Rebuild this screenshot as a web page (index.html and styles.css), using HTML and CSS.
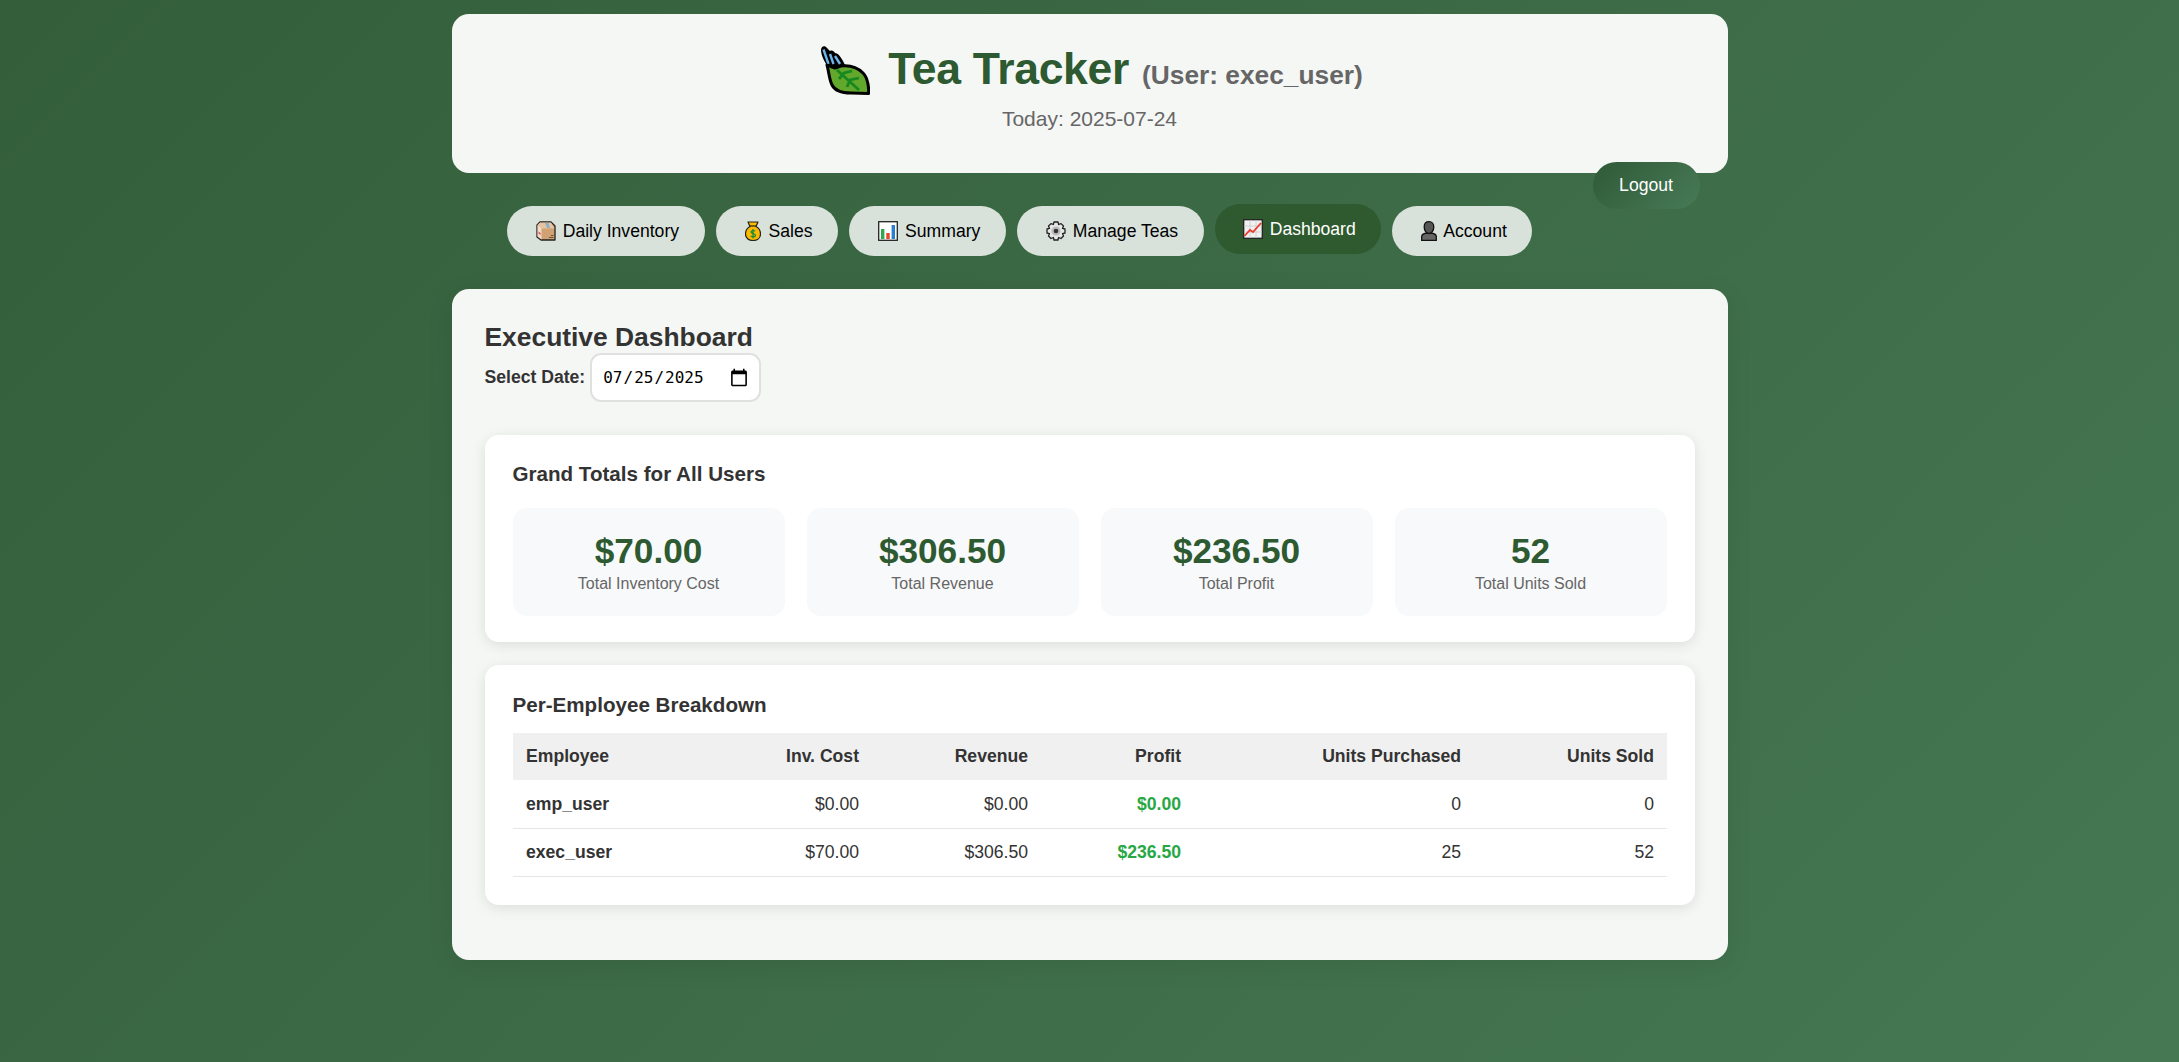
FILE: index.html
```html
<!DOCTYPE html>
<html lang="en">
<head>
<meta charset="utf-8">
<title>Tea Tracker</title>
<link rel="stylesheet" href="styles.css">
</head>
<body>
<div class="container">
  <header class="site-header">
    <h1 class="title">
      <svg class="leaf" viewBox="0 0 49 49" aria-hidden="true">
        <path d="M0 4C0 0 4 -1 6 2L9 5C11 4 13 5 14 7C17 7 20 11 23 17L25 21L9 23C4 18 0 9 0 4Z" fill="#000"/>
        <path d="M2.500 3.500L7.500 18M9 8L12.500 18M14 10L19 18" stroke="#6fb4e8" stroke-width="2.400" fill="none"/>
        <path d="M6 19C8 26 8 33 11 39C14 45 22 47 30 47L47.500 47.500C48 42 47 32 42 27C36 21 28 19 20 20L14 22C11 21 8 20 6 19Z" fill="#62a82c" stroke="#000" stroke-width="3" stroke-linejoin="round"/>
        <path d="M16 24L38 44M18 33L23 27L31 25M26 41L29 34L38 32" stroke="#16881f" stroke-width="2.800" fill="none"/>
      </svg>
      <span class="title-text">Tea Tracker</span>
      <small class="title-user">(User: exec_user)</small>
    </h1>
    <p class="today">Today: 2025-07-24</p>
  </header>
  <a class="logout" href="#">Logout</a>

  <nav class="nav">
    <a class="tab" href="#">
      <svg class="icon" viewBox="0 0 20 20" aria-hidden="true">
        <path d="M4 1H15L19 5V19H5L1 16V4Z" fill="#cfa173" stroke="#222" stroke-width="1.300" stroke-linejoin="round"/>
        <path d="M1.500 4L5 7.500H18.500L15 1.500H4Z" fill="#e6c3a2"/>
        <path d="M5.500 7.500V18.500L1.500 15.500V4Z" fill="#f2dcc8"/>
        <path d="M9 2H12.500L14 7H11Z" fill="#8ab0c8"/>
        <path d="M2.500 10.500L4.500 12V14L2.500 12.500Z" fill="#e0465a"/>
        <path d="M13 16.500H17.500M15 14.500H17.500" stroke="#6b5138" stroke-width="1.200"/>
      </svg>Daily Inventory</a>
    <a class="tab" href="#">
      <svg class="icon icon-bag" viewBox="0 0 16 20" aria-hidden="true">
        <path d="M3 1H13L11 5.500C14 7 15.500 10 15.500 13C15.500 17 12.500 19.500 8 19.500C3.500 19.500 .5 17 .5 13C.5 10 2 7 5 5.500Z" fill="#fdb900" stroke="#222" stroke-width="1.200" stroke-linejoin="round"/>
        <path d="M4 5H12" stroke="#222" stroke-width="1.200"/>
        <path d="M10.200 10.200C9.500 9.300 6 9.200 6 11C6 13 10.500 12.400 10.500 14.500C10.500 16.200 7 16.200 5.800 15M8 8V17.500" stroke="#1a8a3a" stroke-width="1.300" fill="none"/>
      </svg>Sales</a>
    <a class="tab" href="#">
      <svg class="icon" viewBox="0 0 20 20" aria-hidden="true">
        <rect x=".7" y=".7" width="18.600" height="18.600" fill="#fff" stroke="#222" stroke-width="1.300"/>
        <rect x="3" y="8" width="3.400" height="10" fill="#2fa84f"/>
        <rect x="8.300" y="12" width="3.400" height="6" fill="#e8452c"/>
        <rect x="13.600" y="4" width="3.400" height="14" fill="#2a7fd0"/>
      </svg>Summary</a>
    <a class="tab" href="#">
      <svg class="icon" viewBox="0 0 20 20" aria-hidden="true">
        <path d="M8 1H12L12.600 3.500L15 2.600L17.500 5L16.500 7.400L19 8V12L16.500 12.600L17.500 15L15 17.500L12.600 16.500L12 19H8L7.400 16.500L5 17.500L2.500 15L3.500 12.600L1 12V8L3.500 7.400L2.500 5L5 2.600L7.400 3.500Z" fill="#e6e6e6" stroke="#222" stroke-width="1.300" stroke-linejoin="round"/>
        <circle cx="10" cy="10" r="4.600" fill="#bbb"/>
        <circle cx="10" cy="10" r="2.300" fill="#333"/>
      </svg>Manage Teas</a>
    <a class="tab tab-active" href="#">
      <svg class="icon" viewBox="0 0 20 20" aria-hidden="true">
        <rect x=".7" y=".7" width="18.600" height="18.600" fill="#f1f1f1" stroke="#222" stroke-width="1.300"/>
        <path d="M7 1V19M13 1V19M1 7H19M1 13H19" stroke="#ccc" stroke-width=".8"/>
        <path d="M1.500 17L7 11L10 13L18 4" stroke="#ec3a2a" stroke-width="1.800" fill="none"/>
      </svg>Dashboard</a>
    <a class="tab" href="#">
      <svg class="icon icon-bust" viewBox="0 0 16 20" aria-hidden="true">
        <path d="M.7 19.300V15.500C.7 13.500 3 12.500 5.500 12L10.500 12C13 12.500 15.300 13.500 15.300 15.500V19.300Z" fill="#666" stroke="#111" stroke-width="1.300"/>
        <path d="M8 .7C11 .7 12.800 3 12.800 6C12.800 9.500 10.500 12.500 8 12.500C5.500 12.500 3.200 9.500 3.200 6C3.200 3 5 .7 8 .7Z" fill="#555" stroke="#111" stroke-width="1.300"/>
      </svg>Account</a>
  </nav>

  <main class="main-card">
    <h2 class="page-title">Executive Dashboard</h2>
    <div class="date-row">
      <label class="date-label" for="date">Select Date:</label>
      <input class="date-input" id="date" type="date" value="2025-07-25">
    </div>

    <section class="panel panel-totals">
      <h3 class="panel-title panel-title-totals">Grand Totals for All Users</h3>
      <div class="stats">
        <div class="stat"><div class="stat-value">$70.00</div><div class="stat-label">Total Inventory Cost</div></div>
        <div class="stat"><div class="stat-value">$306.50</div><div class="stat-label">Total Revenue</div></div>
        <div class="stat"><div class="stat-value">$236.50</div><div class="stat-label">Total Profit</div></div>
        <div class="stat"><div class="stat-value">52</div><div class="stat-label">Total Units Sold</div></div>
      </div>
    </section>

    <section class="panel">
      <h3 class="panel-title">Per-Employee Breakdown</h3>
      <table class="table">
        <thead>
          <tr>
            <th class="col-emp">Employee</th>
            <th class="num col-cost">Inv. Cost</th>
            <th class="num col-rev">Revenue</th>
            <th class="num col-profit">Profit</th>
            <th class="num col-pur">Units Purchased</th>
            <th class="num">Units Sold</th>
          </tr>
        </thead>
        <tbody>
          <tr>
            <td class="name">emp_user</td><td class="num">$0.00</td><td class="num">$0.00</td>
            <td class="num profit">$0.00</td><td class="num">0</td><td class="num">0</td>
          </tr>
          <tr>
            <td class="name">exec_user</td><td class="num">$70.00</td><td class="num">$306.50</td>
            <td class="num profit">$236.50</td><td class="num">25</td><td class="num">52</td>
          </tr>
        </tbody>
      </table>
    </section>
  </main>
</div>
</body>
</html>
```

FILE: styles.css
```css
* { box-sizing: border-box; }
html, body { height: 100%; }
body {
  margin: 0;
  font-family: "Liberation Sans", Arial, sans-serif;
  color: #333;
  background: linear-gradient(135deg, #345e3a 0%, #457853 100%);
  overflow: hidden;
}
.container {
  position: relative;
  width: 1276px;
  margin: 0 auto;
  padding-top: 14px;
}
.site-header {
  height: 159px;
  padding-top: 20px;
  background: #f5f7f5;
  border-radius: 17px;
  text-align: center;
}
.title {
  margin: 0;
  padding-left: 5px;
  display: flex;
  justify-content: center;
  align-items: center;
  color: #2d5a31;
  font-size: 44.5px;
  line-height: 58px;
  font-weight: 700;
}
.title-text { letter-spacing: -.3px; }
.leaf { width: 49px; height: 49px; margin: 2px 18px 0 0; }
.title-user {
  margin-left: 13px;
  margin-top: 12px;
  color: #666;
  font-size: 26.3px;
  font-weight: 700;
}
.today { margin: 3px 0 0; color: #666; font-size: 21px; line-height: 24px; }
.logout {
  position: absolute;
  top: 162px;
  left: 1141px;
  width: 107px;
  height: 47px;
  display: flex;
  align-items: center;
  justify-content: center;
  border-radius: 24px;
  color: #fff;
  text-decoration: none;
  font-size: 17.6px;
  background: linear-gradient(135deg, #2f5a36, #487a58);
}
.nav {
  display: flex;
  justify-content: center;
  gap: 11px;
  margin-top: 33px;
  padding-right: 140px;
}
.tab {
  display: flex;
  align-items: center;
  height: 50px;
  padding: 0 25.500px 0 29px;
  border-radius: 25px;
  color: #000;
  background: #d8e2db;
  text-decoration: none;
  font-size: 17.6px;
}
.tab-active {
  padding-left: 28px;
  color: #fff;
  background: #2f5a30;
  transform: translateY(-2px);
}
.icon { width: 20px; height: 20px; margin-right: 7px; flex: none; }
.icon-bag { width: 16px; margin-right: 8px; }
.icon-bust { width: 16px; margin-right: 6px; }
.main-card {
  margin-top: 33px;
  height: 671px;
  padding: 32px 33px 0;
  background: #f5f7f5;
  border-radius: 17px;
  box-shadow: 0 6px 28px rgba(0, 0, 0, .08);
}
.page-title { margin: 0; font-size: 26.4px; line-height: 32px; color: #333; }
.date-row { display: flex; align-items: center; height: 49px; }
.date-label { font-size: 17.6px; font-weight: 700; margin-right: 5px; }
.date-input {
  width: 171px;
  height: 49px;
  padding: 0 10px;
  border: 2.500px solid #e0e0e0;
  border-radius: 11px;
  background: #fff;
  color: #000;
  font-family: "DejaVu Sans Mono", monospace;
  font-size: 16px;
}
.date-input::-webkit-calendar-picker-indicator { width: 20px; height: 20px; margin: 0; padding: 0; }
.panel {
  margin-top: 23px;
  padding: 24px 28px 28px;
  background: #fff;
  border-radius: 14px;
  box-shadow: 0 3px 14px rgba(0, 0, 0, .1);
}
.panel-totals { margin-top: 33px; padding-bottom: 26px; }
.panel-title { margin: 0 0 13px; padding-top: 1px; font-size: 20.600px; line-height: 30px; color: #333; }
.panel-title-totals { margin-bottom: 19px; padding-top: 0; }
.stats { display: grid; grid-template-columns: repeat(4, 1fr); gap: 22px; }
.stat {
  height: 108px;
  padding-top: 23px;
  background: #f8f9fa;
  border-radius: 14px;
  text-align: center;
}
.stat-value { font-size: 35.200px; line-height: 40px; font-weight: 700; color: #2d5a31; }
.stat-label { margin-top: 3px; font-size: 16px; line-height: 20px; color: #666; }
.table { width: 100%; border-collapse: collapse; table-layout: fixed; font-size: 17.6px; }
.table th, .table td { padding: 0 12.500px 0 13.500px; text-align: left; }
.table th { height: 47px; background: #f0f0f0; color: #333; font-weight: 700; }
.table td { height: 48px; padding-top: 1px; border-bottom: 1px solid #e6e6e6; }
.table .num { text-align: right; }
.table .profit { color: #28a745; font-weight: 700; }
.name { font-weight: 700; }
.col-emp { width: 200px; }
.col-cost { width: 159px; }
.col-rev { width: 169px; }
.col-profit { width: 153px; }
.col-pur { width: 280px; }
```
